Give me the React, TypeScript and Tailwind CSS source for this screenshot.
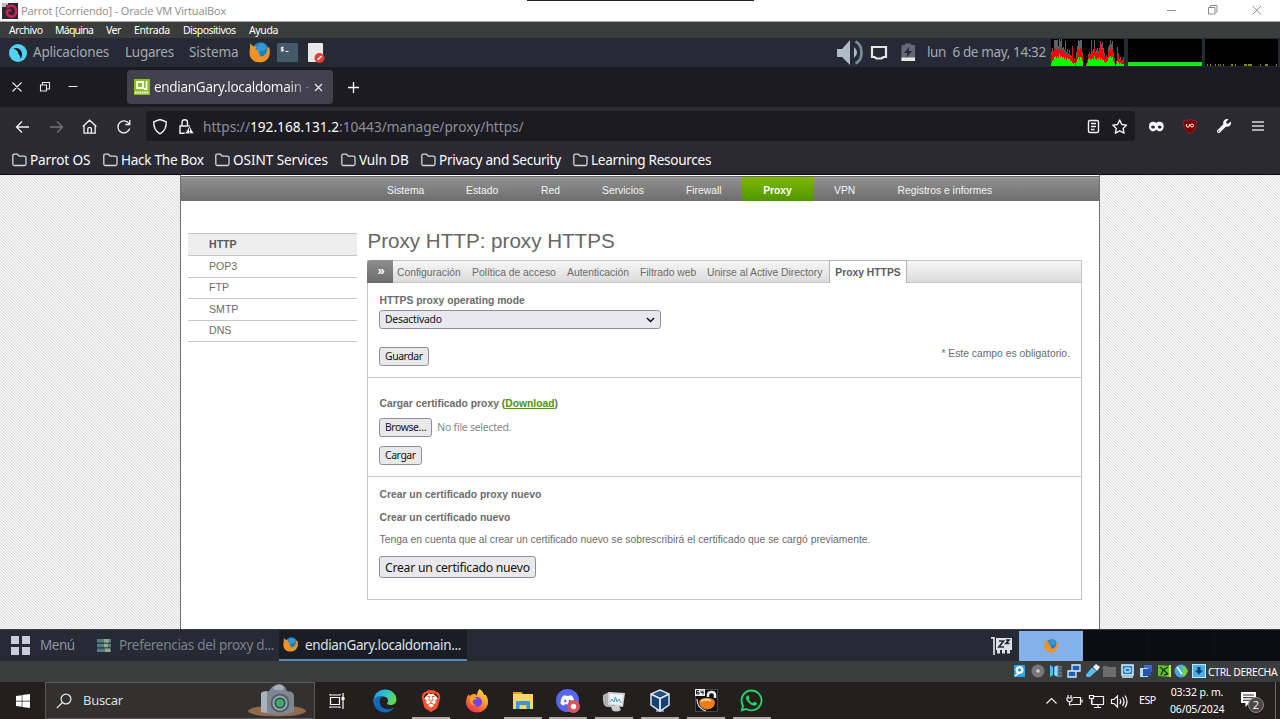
import { type ReactNode } from "react";
import { FaWindows, FaWhatsapp, FaDiscord, FaWrench } from "react-icons/fa";
import { SiBrave } from "react-icons/si";

type P = { children?: ReactNode };

function Firefox({ s = 20 }: { s?: number }) {
  return (
    <svg width={s} height={s} viewBox="0 0 20 20" className="shrink-0">
      <circle cx="11" cy="8.300" r="8" fill="#1b7fc4" />
      <path d="M8 3l3-2 4 1 2 4-4 3-2-1-1 3-3-1z" fill="#4db2e8" opacity=".5" />
      <path d="M1 1.200L4 4l3.500.4L6 7l3 .8-1 2 2 1.500 1 2.600 3-.6 2.400-2.500 1-3.400-.2-2.600 1.400 1 .8-1 .5 4.200c0 6.500-4 10.400-9.500 10.400S.5 16 .5 10.500C.5 7.500 1.300 6 1 1.200z" fill="#ef9422" />
    </svg>
  );
}

function Folder() {
  return (
    <svg width="15" height="14" viewBox="0 0 15 14" className="mr-[3px] shrink-0" fill="none" stroke="#d6d5dc" strokeWidth="1.300">
      <path d="M.8 11V2.600C.8 1.700 1.400 1.200 2.200 1.200h3.200l1.800 2h5.200c.9 0 1.600.6 1.600 1.400V11c0 .9-.6 1.500-1.500 1.500H2.300C1.400 12.500.8 11.900.8 11z" />
    </svg>
  );
}

function TitleBar() {
  return (
    <div className="relative flex h-[22px] items-center border-b border-[#a5a5a5] bg-white font-['Open_Sans',sans-serif]">
      <svg width="16" height="16" viewBox="0 0 16 16" className="ml-[2px] shrink-0">
        <rect width="16" height="16" fill="#262a33" />
        <path d="M5 4.500c2-2 6-2.500 8 0s1.500 7-1 8.500S5.500 13 5 10s2.500-3.500 4-2" fill="none" stroke="#d51e4e" strokeWidth="2.600" />
        <path d="M0 0h6v2H4v2H0z" fill="#b8bfc9" />
      </svg>
      <span className="mt-px ml-[3px] text-[11px] tracking-[-0.16px] text-[#8c8c8c]">Parrot [Corriendo] - Oracle VM VirtualBox</span>
      <div className="mr-[6px] ml-auto flex items-center">
        <svg width="110" height="20" viewBox="0 0 110 20" fill="none" stroke="#8c8c8c" strokeWidth="1">
          <path d="M3 9.500h9M44.500 6.500h6.500v6.500h-6.500zM46.500 6V4.500h6.500V11h-1.500M88.500 5l8.500 8.500M97 5l-8.500 8.500" />
        </svg>
      </div>
      <div className="absolute top-0 left-[527px] h-px w-[227px] bg-[#222]" />
    </div>
  );
}

function MenuBar() {
  return (
    <div className="flex h-[16px] items-center bg-[#3b3c3c] pl-[9px] font-['Noto_Sans',sans-serif] text-[10.500px] leading-none text-white">
      <span className="w-[46px] tracking-[-0.45px]">Archivo</span>
      <span className="w-[51px] tracking-[-0.75px]">Máquina</span>
      <span className="w-[28px] tracking-[-0.5px]">Ver</span>
      <span className="w-[49px] tracking-[-0.4px]">Entrada</span>
      <span className="w-[66px] tracking-[-0.55px]">Dispositivos</span>
      <span className="tracking-[-0.35px]">Ayuda</span>
    </div>
  );
}

const cpu = [14,18,15,26,26,26,26,20,27,25,27,18,19,16,25,14,17,12,16,11,10,20,5,8,4,14,20,26,25,26,26,14,0,0,0,3,6,12,14,12,26,15,17,26,14,16,18,15,18,25,22,24,18,13,7,11,9,19,21,26,22,25,13,8,1,5,19,13,7,9,5,6,9];
const red = [12,14,14,17,19,17,17,16,19,16,20,16,16,13,17,12,15,11,14,9,9,19,5,7,3,9,14,17,15,18,17,11,0,0,0,3,5,11,13,11,16,14,13,18,12,13,15,13,15,23,16,17,12,10,6,9,8,14,16,19,15,16,10,5,1,3,15,11,5,7,4,5,8];
const grn = [3,5,6,9,10,8,10,8,12,9,10,8,9,7,9,6,8,7,7,5,5,3,2,3,1,4,7,9,6,9,8,5,0,0,0,1,3,7,8,6,7,8,6,10,7,6,8,7,9,6,8,6,6,4,3,4,5,8,9,10,8,9,5,3,0,2,5,4,2,3,2,2,2];

function Monitors() {
  const bars = (v: number[]) => v.map((h, i) => `M${i} 27v${-h}h1v${h}z`).join("");
  return (
    <svg width="229" height="27" viewBox="0 0 229 27" className="shrink-0" shapeRendering="crispEdges">
      <path d="M0 0h73v27H0zM77 0h74v27H77zM154 0h73v27h-73z" fill="#000" />
      <path d={bars(cpu)} fill="#5c6069" />
      <path d={bars(red)} fill="#f00" />
      <path d={bars(grn)} fill="#0f0" />
      <path d="M77 23h74v4H77z" fill="#19e619" />
      <path d="M156 25h1v2h-1zM159 25h1v2h-1zM164 25h1v2h-1zM167 25h1v2h-1zM169 25h1v2h-1zM172 25h1v2h-1zM180 25h2v2h-2zM184 25h1v2h-1zM193 25h3v2h-3zM197 25h4v2h-4zM209 25h1v2h-1zM214 25h3v2h-3zM225 25h1v2h-1z" fill="#7a8c08" />
    </svg>
  );
}

function GuestPanel() {
  return (
    <div className="flex h-[29px] items-center bg-[#262a34] font-['Noto_Sans',sans-serif] text-[13.500px] text-[#a4a9b3]">
      <svg width="18" height="18" viewBox="0 0 18 18" className="ml-[9px] shrink-0">
        <circle cx="9" cy="9" r="9" fill="#4fd2f5" />
        <path d="M4.500 4.500c4-1.500 8.500 1 8.500 6 0 2-.8 3.500-1.500 4.500 0-2-.8-4.200-2.200-5.300C9.500 7.500 7 5.500 4.500 4.500z" fill="#10151c" />
      </svg>
      <span className="ml-[6px] w-[92px] tracking-[-0.2px]">Aplicaciones</span>
      <span className="w-[64px] tracking-[-0.25px]">Lugares</span>
      <span className="w-[60px] tracking-[-0.06px]">Sistema</span>
      <Firefox s={21} />
      <svg width="21" height="19" viewBox="0 0 21 19" className="ml-[7px] shrink-0">
        <rect width="21" height="19" rx="1" fill="#46596a" />
        <path d="M6.500 4.500H4.300v1.700h2v1.600H3.800M5.200 3.500v5.200M8.500 8.500h3" stroke="#fff" strokeWidth=".9" fill="none" />
      </svg>
      <svg width="18" height="20" viewBox="0 0 18 20" className="ml-[9px] shrink-0">
        <rect x="1" width="15" height="19" rx="1" fill="#e8e8e8" />
        <circle cx="12.500" cy="15" r="5" fill="#e53b33" />
        <path d="M10.500 17l4-4" stroke="#fff" strokeWidth="1.600" />
      </svg>
      <div className="ml-auto flex items-center">
        <svg width="82" height="27" viewBox="0 0 82 27" className="shrink-0">
          <path d="M0 10h5l8-9v25l-8-8H0zM17 8q6 5.500 0 11z" fill="#afbac4" />
          <path d="M18.500 2.500c8 4 8 18 0 22" fill="none" stroke="#78909c" strokeWidth="2.600" />
          <path d="M35 8h14v10h-2.500l-2 1.500h-5L37.500 18H35z" fill="none" stroke="#e4e6e8" strokeWidth="2.200" />
          <path d="M65 6h3V4.500h6V6h3q1 0 1 1v15H64.500V7q0-1 .5-1z" fill="#636972" />
          <path d="M64.500 18.500H78V22H64.500z" fill="#e6e8ea" />
          <path d="M72.500 7.500L67 14h3.500l-1 5 5.500-7h-3.500z" fill="#262a34" />
        </svg>
        <span className="mr-[4px] ml-[8px] w-[120px] whitespace-pre tracking-[-0.36px]">lun  6 de may, 14:32</span>
        <Monitors />
      </div>
    </div>
  );
}

function TabStrip() {
  return (
    <div className="flex h-[40px] items-center bg-[#1c1b22]">
      <svg width="127" height="40" viewBox="0 0 127 40" fill="none" stroke="#e8e8ee" strokeWidth="1.100" className="shrink-0">
        <path d="M12.500 15.500l9 9M21.500 15.500l-9 9M40.500 18h6v6h-6zM42.500 18v-2.500h7v6.500H47M68.500 19.500h9" />
      </svg>
      <div className="flex h-[34px] w-[206px] items-center rounded-[4px] bg-[#42414d]">
        <svg width="16" height="16" viewBox="0 0 16 16" className="ml-[7px] shrink-0">
          <rect width="16" height="16" fill="#8bbf21" />
          <path d="M3 3h6v6H3zM12.500 2v8H9.500" fill="none" stroke="#fff" strokeWidth="1.800" />
          <path d="M1 13.500h14" stroke="#fff" strokeWidth="2" strokeDasharray="1.500 .8" />
        </svg>
        <span className="ml-[4px] w-[157px] bg-linear-to-r from-[#fbfbfe] from-85% to-[#5a5964] bg-clip-text pt-px font-['Noto_Sans',sans-serif] text-[13.500px] tracking-[-0.3px] whitespace-nowrap text-transparent">endianGary.localdomain -</span>
        <svg width="9" height="9" viewBox="0 0 9 9" stroke="#e8e8ee" strokeWidth="1.200" className="ml-[3px] shrink-0"><path d="M1 1l7 7M8 1l-7 7" /></svg>
      </div>
      <svg width="11" height="11" viewBox="0 0 11 11" stroke="#fbfbfe" strokeWidth="1.300" className="ml-[15px]"><path d="M5.500 0v11M0 5.500h11" /></svg>
    </div>
  );
}

function NavBar() {
  return (
    <div className="flex h-[38px] items-center bg-[#2b2a33]">
      <svg width="146" height="38" viewBox="0 0 146 38" fill="none" stroke="#f0f0f4" strokeWidth="1.300" className="shrink-0">
        <path d="M29 20H16.500M22 14.500L16.500 20l5.500 5.500" />
        <path d="M50 20h12.500M57 14.500l5.500 5.500-5.500 5.500" stroke="#74737c" />
        <path d="M82.800 19.500l6.800-6.300 6.800 6.300M84 18.500v7.700h11.200v-7.700M87.800 26v-4.300q0-1 1-1h1.600q1 0 1 1V26" />
        <path d="M129 16.700a6 6 0 1 0 .7 4.800M129.800 13v4.500h-4.500" />
      </svg>
      <div className="flex h-[30px] w-[989px] items-center rounded-[4px] bg-[#1c1b22]">
        <svg width="50" height="30" viewBox="0 0 50 30" fill="none" stroke="#f0f0f4" strokeWidth="1.400" className="shrink-0">
          <path d="M14 8.500l6.200 2.300c.3 5-1.600 9.500-6.200 12-4.600-2.500-6.500-7-6.200-12z" />
          <path d="M34 15h9.500v7.300H34zM36 14.500v-3c0-3.600 5.500-3.600 5.500 0v3" />
          <path d="M43.500 14.800l4.700 8h-9.400z" fill="#f0f0f4" stroke="#1c1b22" strokeWidth=".8" />
          <path d="M43.500 17.500V20M43.500 20.800v1" stroke="#1c1b22" strokeWidth="1" />
        </svg>
        <span className="ml-[7px] pt-[2px] font-['Noto_Sans',sans-serif] text-[13.650px] text-[#8f8f98]">
          https://<span className="text-[#fbfbfe]">192.168.131.2</span>:10443/manage/proxy/https/
        </span>
        <svg width="54" height="30" viewBox="0 0 54 30" fill="none" stroke="#f0f0f4" strokeWidth="1.400" className="ml-auto shrink-0">
          <rect x="7.500" y="9.500" width="10" height="12" rx="1.500" />
          <path d="M10 12.500h5M10 15.500h5M10 18.500h3.500" />
          <path d="M38.700 9l2.100 4.500 4.800.6-3.500 3.300.9 4.800-4.300-2.400-4.300 2.400.9-4.800-3.500-3.300 4.800-.6z" strokeLinejoin="round" />
        </svg>
      </div>
      <svg width="60" height="38" viewBox="0 0 60 38" className="ml-[8px] shrink-0">
        <path d="M6 19c0-5 5.500-5 7.300-2.800C15 14 20.700 14 20.700 19c0 6-5.400 6.500-7.400 3.500C11.300 25.500 6 25 6 19z" fill="#fbfbfe" />
        <ellipse cx="10" cy="20" rx="1.900" ry="1.500" fill="#2b2a33" /><ellipse cx="16.700" cy="20" rx="1.900" ry="1.500" fill="#2b2a33" />
        <path d="M47 12.500c2 0 4 1.500 6.500 1.500 0 6-1.500 10-6.500 12.500-5-2.500-6.500-6.500-6.500-12.500 2.500 0 4.500-1.500 6.500-1.500z" fill="#800000" stroke="#a33" strokeWidth=".6" />
        <path d="M43.500 17v2q0 1.200 1.400 1.200t1.400-1.200V17" fill="none" stroke="#fff" />
        <circle cx="49" cy="18.500" r="1.500" fill="none" stroke="#fff" />
      </svg>
      <FaWrench size={14} color="#fbfbfe" className="ml-[14px] shrink-0" />
      <svg width="12" height="12" viewBox="0 0 12 12" stroke="#d8d8de" strokeWidth="1.300" className="ml-[21px] shrink-0"><path d="M0 2h12M0 6h12M0 10h12" /></svg>
    </div>
  );
}

function Bookmarks() {
  return (
    <div className="flex h-[30px] items-center border-b border-[#0c0c0d] bg-[#2b2a33] pt-px pl-[12px] font-['Noto_Sans',sans-serif] text-[13.600px] tracking-[-0.3px] whitespace-nowrap text-[#fbfbfe]">
      <span className="flex w-[91px] items-center tracking-[-0.15px]"><Folder />Parrot OS</span>
      <span className="flex w-[112px] items-center"><Folder />Hack The Box</span>
      <span className="flex w-[126px] items-center tracking-[-0.08px]"><Folder />OSINT Services</span>
      <span className="flex w-[80px] items-center tracking-[-0.15px]"><Folder />Vuln DB</span>
      <span className="flex w-[152px] items-center"><Folder />Privacy and Security</span>
      <span className="flex items-center"><Folder />Learning Resources</span>
    </div>
  );
}

function Btn({ children }: P) {
  return (
    <button className="flex h-[19px] shrink-0 items-center rounded-[3px] border border-[#8f8f9d] bg-[#e9e9ed] px-[5px] pt-px font-['Noto_Sans',sans-serif] text-[10.400px] tracking-[-0.4px] text-[#111]">
      {children}
    </button>
  );
}

function SideMenu() {
  return (
    <ul className="mt-[32px] ml-[7px] h-[110px] w-[169px] shrink-0 border-t border-[#c6c6c6] text-[10.600px] text-[#6b6b6b]">
      <li className="flex h-[22px] items-center border-b border-[#c6c6c6] bg-[#eee] pl-[21px] font-bold text-[#5a5a5a]">HTTP</li>
      <li className="flex h-[21.500px] items-center border-b border-[#c6c6c6] pt-px pl-[21px]">POP3</li>
      <li className="flex h-[21.500px] items-center border-b border-[#c6c6c6] pl-[21px]">FTP</li>
      <li className="flex h-[21.500px] items-center border-b border-[#c6c6c6] pt-px pl-[21px]">SMTP</li>
      <li className="flex h-[21.500px] items-center border-b border-[#c6c6c6] pl-[21px]">DNS</li>
    </ul>
  );
}

function WebPage() {
  return (
    <div className="flex h-[454px] justify-center bg-white bg-[repeating-linear-gradient(45deg,#d9d9d9_0px,#fdfdfd_0.9px,#fdfdfd_1.221px,#d9d9d9_2.121px)] font-['Liberation_Sans',sans-serif]">
      <div className="flex w-[920px] flex-col border-x border-[#707070] bg-white">
        <nav className="mt-px flex h-[25px] shrink-0 items-stretch border-t border-[#666] bg-linear-to-b from-[#919191] to-[#6e6e6e] text-[10.330px] leading-[28px] text-[#f4f4f4] shadow-[inset_0_1px_0_#a0a0a0]">
          <span className="ml-[206px] w-[79px]">Sistema</span>
          <span className="w-[75px]">Estado</span>
          <span className="w-[61px]">Red</span>
          <span className="w-[84px]">Servicios</span>
          <span className="w-[56px]">Firewall</span>
          <span className="w-[71px] bg-linear-to-b from-[#80b800] to-[#4f9600] text-center font-bold text-white">Proxy</span>
          <span className="ml-[21px] w-[63.500px]">VPN</span>
          <span>Registros e informes</span>
        </nav>
        <div className="flex min-h-0 flex-1">
          <SideMenu />
          <main className="ml-[10px] w-[715px] text-[11px] text-[#6b6b6b]">
            <h1 className="mt-[27px] h-[32px] pl-[0.500px] text-[20.600px] leading-[26px] text-[#666]">Proxy HTTP: proxy HTTPS</h1>
            <div className="flex h-[23px] border border-[#c6c6c6] bg-linear-to-b from-[#f6f6f6] to-[#dcdcdc] text-[10.330px] leading-[23px]">
              <span className="-my-px -ml-px h-[23px] w-[26px] rounded-tl-[4px] bg-linear-to-b from-[#8e8e8e] to-[#6c6c6c] pl-[2px] text-center text-[13px] leading-[21px] font-bold text-white">»</span>
              <span className="ml-[4px] w-[75px]">Configuración</span>
              <span className="w-[95px]">Política de acceso</span>
              <span className="w-[73px]">Autenticación</span>
              <span className="w-[67px]">Filtrado web</span>
              <span className="w-[122px]">Unirse al Active Directory</span>
              <span className="-my-px h-[23px] w-[78px] border border-b-0 border-[#b5b5b5] bg-white text-center font-bold text-[#5c5c5c]">Proxy HTTPS</span>
            </div>
            <div className="h-[317px] border border-t-0 border-[#c6c6c6] text-[10.330px]">
              <section className="h-[95px] border-b border-[#c6c6c6] px-[11px] pt-[10px]">
                <div className="pl-[0.500px] leading-[16px] font-bold">HTTPS proxy operating mode</div>
                <div className="mt-px flex h-[19px] w-[282px] items-center justify-between rounded-[3px] border border-[#8f8f9d] bg-[#e9e9ed] pr-[5px] pl-[5px] font-['Noto_Sans',sans-serif] text-[10.400px] tracking-[-0.25px] text-[#111]">
                  <span>Desactivado</span>
                  <svg width="9" height="6" viewBox="0 0 9 6" fill="none" stroke="#111" strokeWidth="1.500"><path d="M1 1l3.500 3.500L8 1" /></svg>
                </div>
                <div className="mt-[18px] flex items-start justify-between">
                  <Btn>Guardar</Btn>
                  <span className="leading-[13px]">* Este campo es obligatorio.</span>
                </div>
              </section>
              <section className="h-[99px] border-b border-[#c6c6c6] px-[11px] pt-[18px]">
                <div className="pl-[0.500px] leading-[16px] font-bold">Cargar certificado proxy (<a className="text-[#4f9600] underline">Download</a>)</div>
                <div className="mt-[6px] flex items-center gap-[5px]">
                  <Btn>Browse…</Btn>
                  <span className="pt-px font-['Noto_Sans',sans-serif] text-[10.400px] tracking-[-0.22px] text-[#858585]">No file selected.</span>
                </div>
                <div className="mt-[9px] flex"><Btn>Cargar</Btn></div>
              </section>
              <section className="px-[11px] pt-[10px]">
                <div className="pl-[0.500px] leading-[16px] font-bold">Crear un certificado proxy nuevo</div>
                <div className="mt-[7px] pl-[0.500px] leading-[16px] font-bold">Crear un certificado nuevo</div>
                <div className="mt-[6px] pl-[0.500px] leading-[16px]">Tenga en cuenta que al crear un certificado nuevo se sobrescribirá el certificado que se cargó previamente.</div>
                <button className="mt-[8px] flex h-[22px] items-center rounded-[3px] border border-[#8f8f9d] bg-[#e9e9ed] px-[5px] pt-[2px] font-['Noto_Sans',sans-serif] text-[12.200px] tracking-[-0.25px] text-[#111]">Crear un certificado nuevo</button>
              </section>
            </div>
          </main>
        </div>
      </div>
    </div>
  );
}

function GuestTaskbar() {
  return (
    <div className="flex h-[32px] items-center border-t border-[#3a3d45] bg-[#262a34] font-['Noto_Sans',sans-serif] text-[13.500px] whitespace-nowrap">
      <svg width="19" height="19" viewBox="0 0 19 19" className="ml-[11px] shrink-0" fill="#c8ccdb"><path d="M0 0h8v8H0zM11 0h8v8h-8zM0 11h8v8H0zM11 11h8v8h-8z" /></svg>
      <span className="mb-px ml-[10px] w-[57px] tracking-[-0.45px] text-[#8f95a1]">Menú</span>
      <svg width="14" height="13" viewBox="0 0 14 13" className="shrink-0"><path d="M0 0h14v3.600H0zM0 4.700h14v3.600H0zM0 9.400h14V13H0z" fill="#567b83" /><path d="M7 0h5v3.600H7zM7 4.700h4v3.600H7zM8 9.400h5V13H8z" fill="#8faa8b" /></svg>
      <span className="mb-px ml-[8px] w-[160px] tracking-[-0.3px] text-[#7c818b]">Preferencias del proxy d...</span>
      <div className="flex h-[31px] w-[188px] items-center border-b-2 border-[#5d86c6] bg-[#1a1d25] pl-[4px] text-[#dfe1e5]">
        <Firefox s={15} />
        <span className="ml-[7px] pt-[2px] tracking-[-0.37px]">endianGary.localdomain...</span>
      </div>
      <svg width="22" height="20" viewBox="0 0 22 20" className="ml-auto shrink-0">
        <path d="M5 2h16v12H5z" fill="#dce0e5" />
        <path d="M0 1.800h3V19" stroke="#dce0e5" strokeWidth="1.700" fill="none" />
        <path d="M6 15.500h3M11 15.500h3M16 15.500h3" stroke="#dce0e5" strokeWidth="4" />
        <path d="M8 5h4.500L8 11h5M15 4h3l-3 3.500h3.500" fill="none" stroke="#262a34" strokeWidth="1.700" />
      </svg>
      <div className="ml-[6px] flex h-[30px] w-[64px] items-center justify-center bg-[#84b1e9]"><Firefox s={14} /></div>
      <div className="flex h-full w-[197px] bg-[#0b0d11]">
        <div className="w-[66px] border-r border-[#101217]" />
        <div className="w-[66px] border-r border-[#101217]" />
      </div>
    </div>
  );
}

function StatusBar() {
  return (
    <div className="flex h-[21px] items-center justify-end bg-[#3b3c3c] pb-px">
      <svg width="194" height="16" viewBox="0 0 194 16" className="shrink-0">
        <rect x="1" y="2" width="11" height="12" rx="1" fill="#2aa4ee" /><circle cx="6.500" cy="7" r="4" fill="#e8f5ff" /><circle cx="6.500" cy="7" r="1.500" fill="#2a7fc0" /><path d="M2 13l5-4" stroke="#fff" strokeWidth="1.500" />
        <circle cx="25" cy="8" r="6.500" fill="#777" /><circle cx="25" cy="8" r="1.800" fill="#ccc" />
        <path d="M37 2l3 2v8l-3 2zM41 4l4-2v12l-4-2z" fill="#58b9f0" /><path d="M45 3h4v11h-4z" fill="#6d7780" /><path d="M43 3v10" stroke="#e8f8ff" /><path d="M46 5h3M46 8h3M46 11h3" stroke="#3b3c3c" />
        <path d="M59 2h8v6h-8zM55 8h8v6h-8z" fill="#1b60b8" stroke="#d8eeff" strokeWidth="1.300" />
        <path d="M73 11.500l6-7 4.500 3.500-6.500 6h-3.500z" fill="#59bdf4" /><path d="M80 4l3-3 4 3-3 4z" fill="#e5f4ff" />
        <path d="M90 3h5l1 1h7v10H90z" fill="#6d6d6d" />
        <path d="M109 2h11v10h-11z" fill="#1a80d0" stroke="#dff1ff" strokeWidth="1.500" /><path d="M112 5h5v4h-5z" fill="#1a80d0" stroke="#fff" /><path d="M109 14h11" stroke="#dff1ff" strokeWidth="1.500" />
        <path d="M131 2h8v7h-8z" fill="#376bd2" /><path d="M127 5h8v9h-8z" fill="#b8d8ff" /><path d="M130 6h8v7h-8z" fill="#2556b0" />
        <path d="M145 2l12 1v11l-12-1z" fill="#5fc52a" /><path d="M147 4l8 7M155 4l-5 3-2 5M151 12l4-1" stroke="#163b08" strokeWidth="1.400" fill="none" /><path d="M156 2h2v12h-2z" fill="#c9d94b" />
        <circle cx="168" cy="8" r="6.500" fill="#45a9e7" /><path d="M168 3l4 1 3 4-4 6-3-4 2-2z" fill="#79ce3a" /><path d="M164 4l5 7" stroke="#fff" strokeWidth="1.500" />
        <rect x="179.500" y="1.500" width="13" height="13" fill="#45b1ef" stroke="#bde6ff" /><path d="M184.500 4h3v3.500h2.500L186 11.500 182 7.500h2.500z" fill="#0b3a66" />
      </svg>
      <span className="mt-[3px] ml-px w-[72px] font-['Noto_Sans',sans-serif] text-[10.400px] tracking-[-0.35px] whitespace-nowrap text-white">CTRL DERECHA</span>
    </div>
  );
}

function TaskSlot({ children, on = true }: P & { on?: boolean }) {
  return (
    <div className="flex h-full w-[45.900px] shrink-0 items-center justify-center">
      <div className={on ? "flex h-full w-[38px] items-center justify-center border-b-2 border-[#aeabaa] pt-[2px]" : "flex h-full w-[38px] items-center justify-center"}>{children}</div>
    </div>
  );
}

function Camera() {
  return (
    <svg width="58" height="33" viewBox="0 0 58 33" className="ml-auto shrink-0">
      <ellipse cx="29" cy="27" rx="29" ry="5.500" fill="#94694a" />
      <path d="M14 8l7-1 3-4q8-6 13 0l2 4 5 1 2 3v17q-15 6-33 0V10z" fill="#7e8791" />
      <path d="M14 8l5-1v22l-6-1V10z" fill="#aab3bb" />
      <circle cx="32" cy="19" r="9.500" fill="#565e68" /><circle cx="32" cy="19" r="7.500" fill="#9aa5ab" /><circle cx="32" cy="19" r="5.500" fill="#1f4f43" /><circle cx="32" cy="19" r="4" fill="#45a86c" />
      <path d="M25 3q7-5 11 0l-1 3h-9z" fill="#a5aeb7" />
    </svg>
  );
}

function WindowsTaskbar() {
  return (
    <div className="flex h-[37px] items-center bg-[#231f1e] font-['Open_Sans',sans-serif] text-white">
      <div className="flex w-[45px] justify-center"><FaWindows size={16} /></div>
      <div className="flex h-full w-[270px] items-center border border-[#5b5959] bg-[#323130] pr-[8px]">
        <svg width="16" height="16" viewBox="0 0 16 16" fill="none" stroke="#eee" strokeWidth="1.200" className="ml-[10px]"><circle cx="10" cy="6" r="4.900" /><path d="M6.500 9.500L.8 15.200" /></svg>
        <span className="ml-[11px] pt-px font-['Noto_Sans',sans-serif] text-[13px] tracking-[-0.3px] text-[#dedede]">Buscar</span>
        <Camera />
      </div>
      <TaskSlot on={false}>
        <svg width="17" height="16" viewBox="0 0 17 16" fill="none" stroke="#fff" strokeWidth="1.200"><path d="M1.500 4.500h9v7h-9zM1 1v1h10V1M1 15v-1h10v1M14 0v16" /><path d="M12.500 4h3v3h-3z" fill="#fff" stroke="none" /></svg>
      </TaskSlot>
      <div className="w-px" />
      <TaskSlot on={false}>
        <svg width="24" height="24" viewBox="0 0 24 24">
          <defs><linearGradient id="ed" x1="0" y1="0" x2="1" y2=".3"><stop offset="0" stopColor="#1d9be0" /><stop offset=".6" stopColor="#31c4cf" /><stop offset="1" stopColor="#63d84f" /></linearGradient></defs>
          <path d="M.5 11C1.500 4 6.500.5 12 .5c7 0 11.500 5 11.500 10 0 4-3 5.500-6 5.500-2.500 0-4-.8-3-2.500 1.800-3-1-6-4-6C6 7.500 2 9 .5 14z" fill="url(#ed)" />
          <path d="M.5 12C1 8.500 5 6.500 9.500 7.500c-4 2-3.500 8-.5 10.500s8 3 12 .5c-2 3.500-5.500 5-9 5C5.500 23.500.5 18.500.5 12z" fill="#1569bd" />
        </svg>
      </TaskSlot>
      <TaskSlot><SiBrave size={22} color="#fb542b" className="rounded-full bg-[radial-gradient(circle,#fff_45%,transparent_46%)]" /></TaskSlot>
      <TaskSlot on={false}>
        <svg width="24" height="24" viewBox="0 0 24 24">
          <defs><linearGradient id="ff" x1=".8" y1="0" x2=".2" y2="1"><stop offset="0" stopColor="#ffe04a" /><stop offset=".5" stopColor="#ff8a22" /><stop offset="1" stopColor="#ee2457" /></linearGradient></defs>
          <path d="M14.500 0c3 2 4 4 4.500 6 1 0 1.500-.5 1.500-.5 2 2.500 2.500 5 2.500 7.500 0 6-5 10.500-11 10.500S1 19 1 13c0-3 1-5.500 3-8l.5 2C6 6 7 4.500 9.500 5c1 0 2 1 2.500 1.500C12 4 13 2 14.500 0z" fill="url(#ff)" />
          <circle cx="12" cy="13" r="5" fill="#7542e5" /><path d="M5 8c3-1 5 0 7 2l-4 1c-1 3 1 5 4 5-4 2-8-1-7-8z" fill="#ffa125" />
        </svg>
      </TaskSlot>
      <TaskSlot>
        <svg width="22" height="20" viewBox="0 0 22 20"><path d="M1 1h8l2 2h10v15H1z" fill="#ffd567" /><path d="M1 1h8l1 2H1z" fill="#e3a21a" /><path d="M4 18v-7q0-1 1-1h12q1 0 1 1v7h-3.500v-4h-7v4z" fill="#3f96d4" /></svg>
      </TaskSlot>
      <TaskSlot>
        <div className="relative h-[24px] w-[24px] shrink-0">
          <div className="flex h-[23px] w-[23px] items-center justify-center rounded-full bg-[#5865f2]"><FaDiscord size={15} color="#fff" /></div>
          <svg width="13" height="13" viewBox="0 0 13 13" className="absolute top-[11px] left-[11px]"><circle cx="6.500" cy="6.500" r="6.500" fill="#dc5360" /><circle cx="6.500" cy="6.500" r="2.700" fill="#fff" /></svg>
        </div>
      </TaskSlot>
      <TaskSlot>
        <svg width="24" height="22" viewBox="0 0 24 22"><path d="M1 5l6-3 3 1v14H5q-5-1-4-12z" fill="#aeb0b2" /><path d="M9 16h8l2 4q-5 3-9 0z" fill="#c9cbcd" /><path d="M6 2l17 1-2 14L6 15z" fill="#d6d8d8" /><path d="M8 4l13 1-1.500 10L8 13.500z" fill="#edf6fa" /><path d="M8 12l2-3 2 3 1.500-5L15 12l2-3 2 4" fill="none" stroke="#4f92bd" /></svg>
      </TaskSlot>
      <TaskSlot>
        <svg width="22" height="24" viewBox="0 0 22 24"><path d="M7 20h8v3H7z" fill="#77879b" /><path d="M11 1l9 4v11l-9 6-9-6V5z" fill="#183f73" stroke="#d7e2ed" strokeWidth="1.500" /><path d="M2 5l9 4.500L20 5M11 9.500V22" stroke="#e4edf5" strokeWidth="1.800" fill="none" /><path d="M6 5l5-2 5 2-5 2.300z" fill="#29558e" /></svg>
      </TaskSlot>
      <TaskSlot>
        <svg width="23" height="23" viewBox="0 0 23 23"><rect x=".5" y=".5" width="22" height="22" fill="#111" stroke="#666" strokeWidth=".6" /><path d="M13 8V6q0-3 3.500-3T20 6v3" fill="none" stroke="#e8e8e8" strokeWidth="2.500" /><path d="M4 13q1-4 8-4t8 4q0 7-8 7.500-7-.5-8-7.500z" fill="#ed7c20" /><path d="M6 12q6-3 10 0" fill="none" stroke="#ffd49a" strokeWidth="2" /><path d="M2 10q0 9 9 12" fill="none" stroke="#ddd" strokeWidth="1.200" /><path d="M0 0h10v7H0z" fill="#eee" /><path d="M4 1.500H1.500v3.500H4V3.300H2M6 1.500v2h2.500M8 1.500v4" stroke="#222" fill="none" /></svg>
      </TaskSlot>
      <TaskSlot><FaWhatsapp size={25} color="#25d366" className="shrink-0" /></TaskSlot>
      <svg width="88" height="24" viewBox="0 0 88 24" fill="none" stroke="#f1f1f1" strokeWidth="1.200" className="ml-auto shrink-0">
        <path d="M1.500 14.500l5-5 5 5" />
        <path d="M28 8.500h7.500v7h-9M37 10.500v3M23 6v3M26 6v3M22 9h5v2q0 1.500-2.500 1.500T22 11zM24.500 12.500V16h2" />
        <path d="M49 7.500h9.500v8H47v-5M53 15.500v3M49 18.500h7M44.500 6.500h4v3h-4zM46.500 9.500V15" />
        <path d="M66.500 10.500H69l3.500-3.500v11L69 14.500h-2.500zM75 10q1.500 2.500 0 5M77.500 8q3 4.500 0 9M80 6.500q4 6 0 12" />
      </svg>
      <span className="ml-[6px] w-[31px] font-['Noto_Sans',sans-serif] text-[10.700px] tracking-[-0.5px]">ESP</span>
      <div className="w-[54px] text-center font-['Noto_Sans',sans-serif] text-[10.500px] leading-[16.500px] tracking-[-0.15px] whitespace-nowrap">
        <div>03:32 p. m.</div>
        <div>06/05/2024</div>
      </div>
      <svg width="24" height="24" viewBox="0 0 24 24" className="mr-[10px] ml-[17px] shrink-0">
        <path d="M0 3h15v11H8l-3.500 4v-4H0z" fill="#fff" /><path d="M2 6h11M2 8.700h11M2 11.300h8" stroke="#231f1e" />
        <circle cx="15" cy="16" r="7.500" fill="#4a4746" stroke="#8a8786" />
        <text x="15" y="20" fontSize="11" textAnchor="middle" fill="#fff">2</text>
      </svg>
      <div className="h-full w-[5px] shrink-0 border-l border-[#6b6867]" />
    </div>
  );
}

export default function App() {
  return (
    <div className="flex h-[719px] w-[1280px] flex-col overflow-hidden bg-black">
      <TitleBar />
      <MenuBar />
      <GuestPanel />
      <TabStrip />
      <NavBar />
      <Bookmarks />
      <WebPage />
      <GuestTaskbar />
      <StatusBar />
      <WindowsTaskbar />
    </div>
  );
}
